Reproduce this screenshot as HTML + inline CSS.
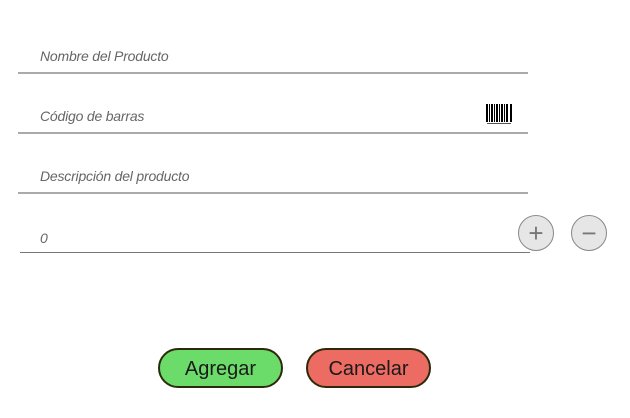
<!DOCTYPE html>
<html><head><style>
body{margin:0;width:630px;height:418px;background:#fff;position:relative;font-family:"Liberation Sans",sans-serif;overflow:hidden}
.t{position:absolute;left:40px;font-size:14px;font-style:italic;color:#666;letter-spacing:-0.2px}
.l{position:absolute;height:1px;background:#9a9a9a}
.c{position:absolute;width:36px;height:36px;border-radius:50%;background:#e6e6e6;border:1px solid #888;color:#777;font-size:26px;line-height:34px;text-align:center;box-sizing:border-box}
.b{position:absolute;top:348px;height:40px;width:125px;border:2px solid #2d2a0c;border-radius:20px;box-sizing:border-box;font-size:20px;color:#1a1a1a;text-align:center;line-height:39px}
</style></head><body>
<div class="t" style="top:48px">Nombre del Producto</div>
<div class="l" style="left:18px;width:510px;top:72px;height:2px;background:#aaa"></div>
<div class="t" style="top:108px">Código de barras</div>
<div class="l" style="left:18px;width:510px;top:132px;height:2px;background:#aaa"></div>
<svg style="position:absolute;left:486px;top:104px" width="27" height="21">
<g fill="#000"><rect x="0" y="0" width="2" height="18"/><rect x="3" y="0" width="1" height="18"/><rect x="5" y="0" width="2" height="18"/><rect x="8" y="0" width="1" height="18"/><rect x="10" y="0" width="2" height="18"/><rect x="13" y="0" width="1" height="18"/><rect x="15" y="0" width="2" height="18"/><rect x="18" y="0" width="1" height="18"/><rect x="20" y="0" width="2" height="18"/><rect x="24" y="0" width="2" height="18"/>
<rect x="1" y="19" width="24" height="1" fill="#555"/></g></svg>
<div class="t" style="top:168px">Descripción del producto</div>
<div class="l" style="left:18px;width:510px;top:192px;height:2px;background:#aaa"></div>
<div class="t" style="top:230px">0</div>
<div class="l" style="left:20px;width:510px;top:252px;background:#777"></div>
<div class="c" style="left:518px;top:215px">+</div>
<div class="c" style="left:571px;top:215px">−</div>
<div class="b" style="left:158px;background:#6bdc6a">Agregar</div>
<div class="b" style="left:306px;background:#ec6b62">Cancelar</div>
</body></html>
